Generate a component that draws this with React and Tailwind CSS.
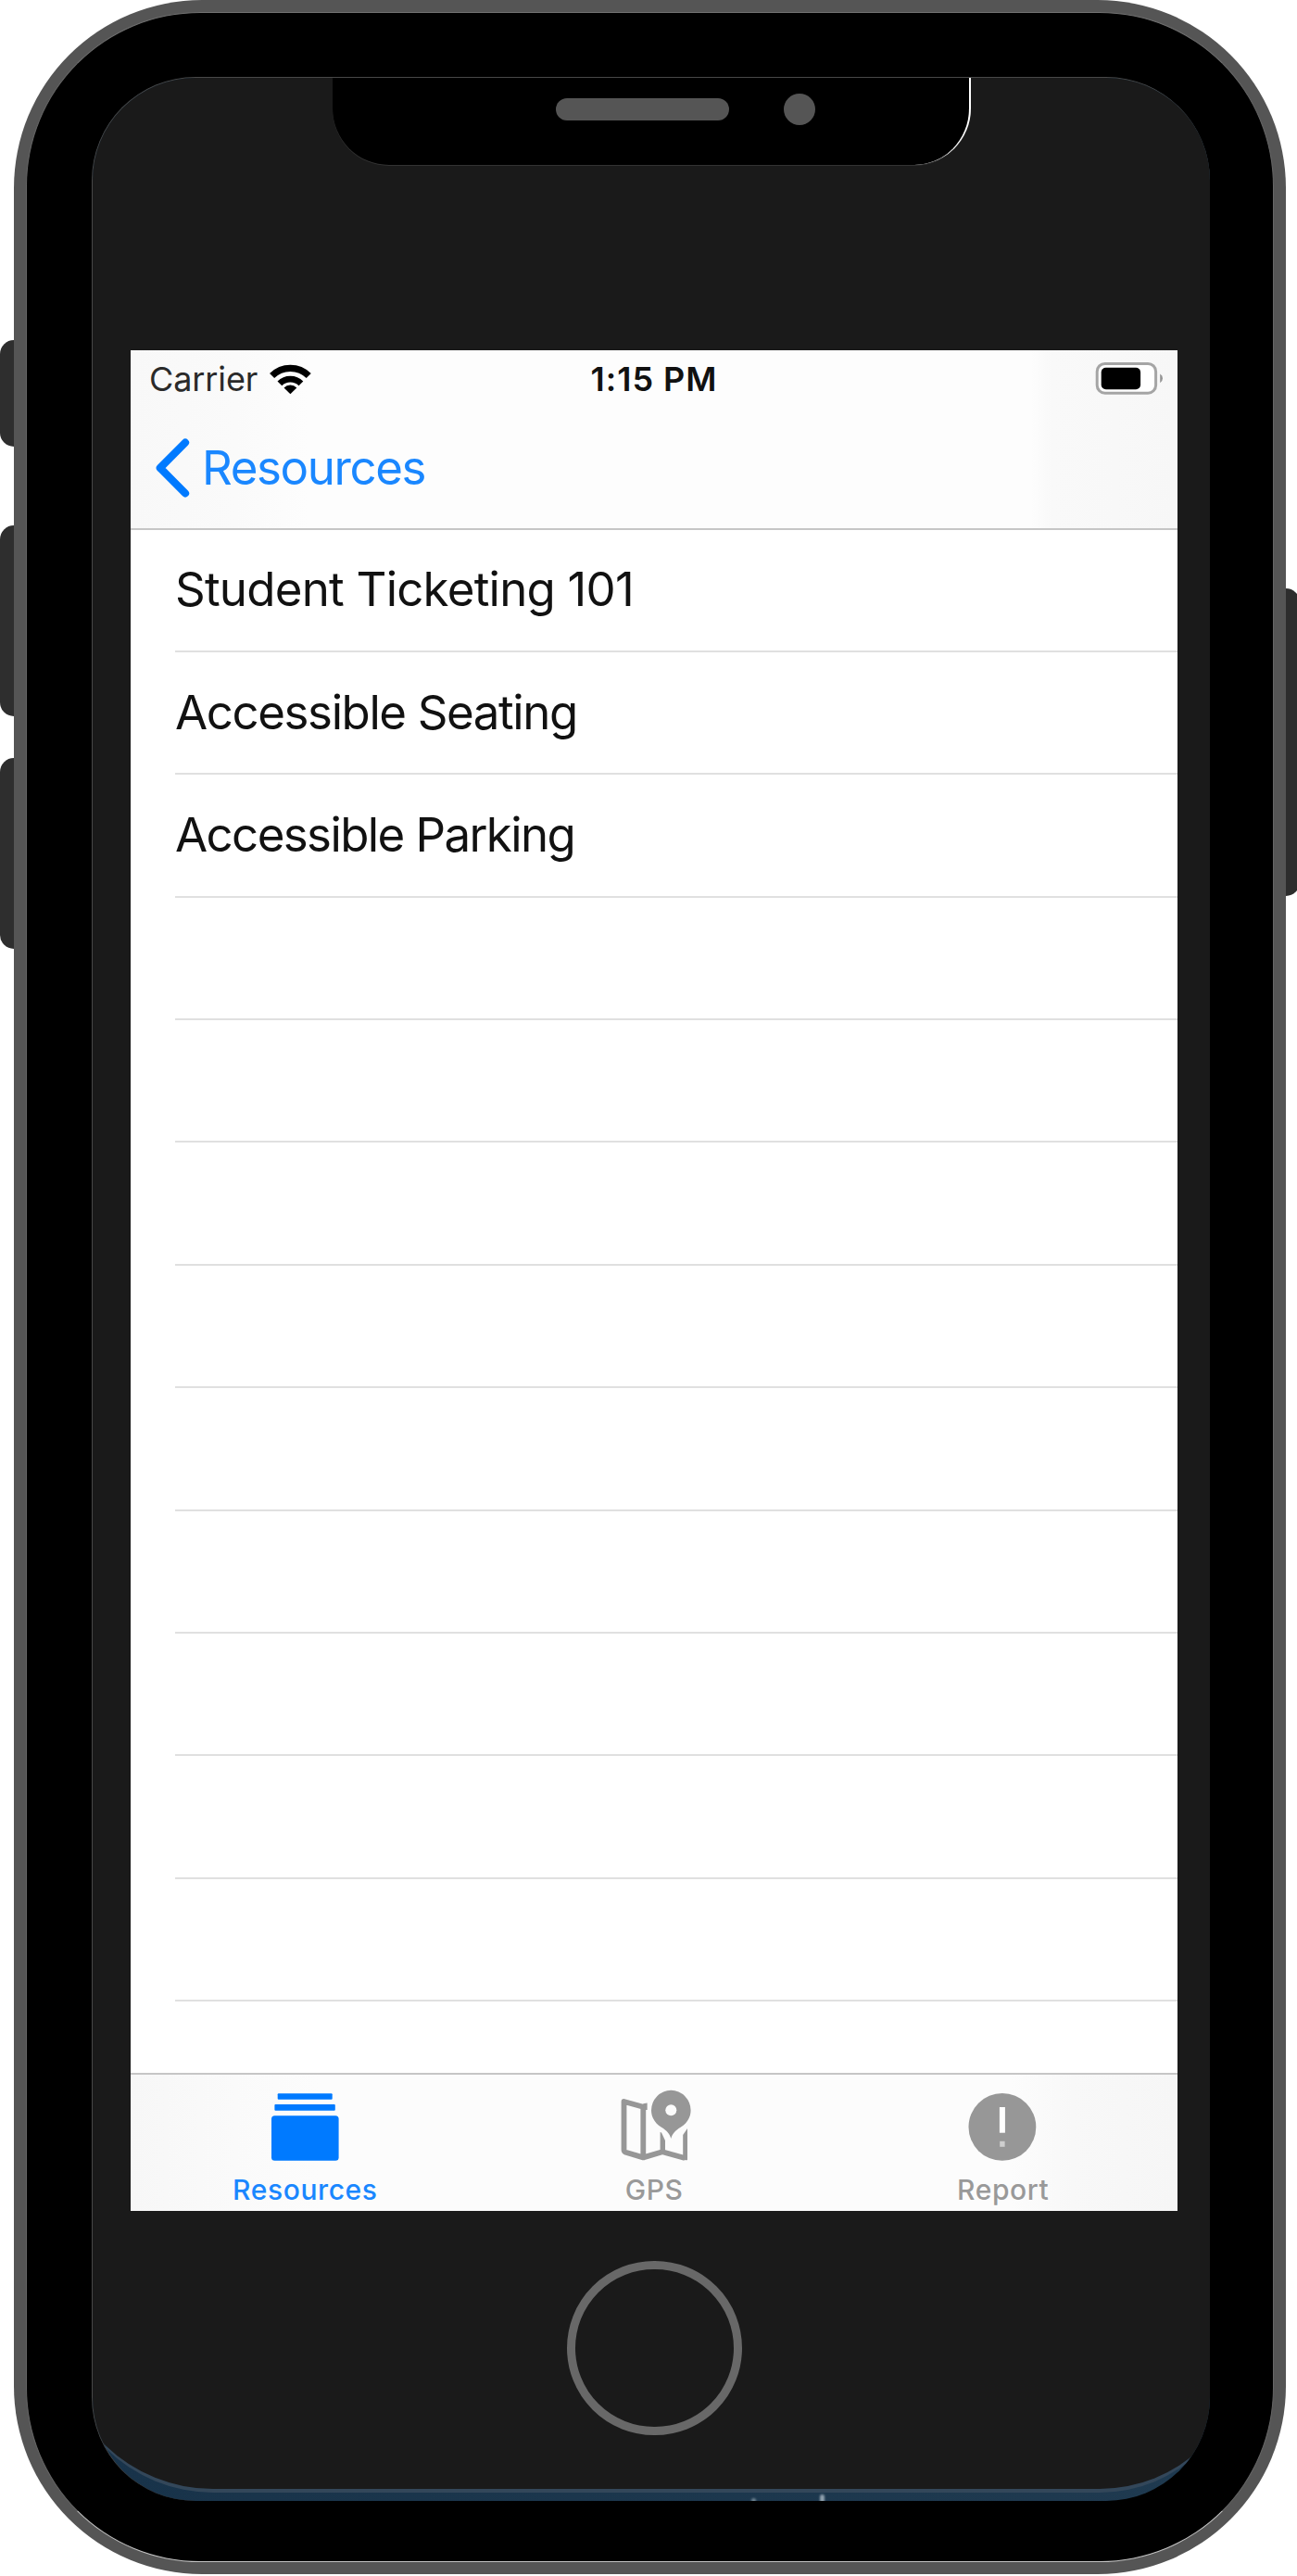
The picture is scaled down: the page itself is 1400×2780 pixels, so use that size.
import React from "react";

const rows = [
  { label: "Student Ticketing 101", tracking: "tracking-[-0.77px]" },
  { label: "Accessible Seating", tracking: "tracking-[-1.4px]" },
  { label: "Accessible Parking", tracking: "tracking-[-1.6px]" },
  ...Array.from({ length: 9 }, () => ({ label: "", tracking: "" })),
];

function WifiIcon() {
  return (
    <svg className="h-[36px] w-[47px] shrink-0" viewBox="0 0 47 36" fill="none" stroke="#000">
      <path d="M3.6 14.5A28 28 0 0 1 43.2 14.5" strokeWidth="7.2" />
      <path d="M11.9 22.8A16.3 16.3 0 0 1 34.9 22.8" strokeWidth="6.8" />
      <path d="M23.4 34.3L16.5 27.4A9.7 9.7 0 0 1 30.3 27.4Z" fill="#000" stroke="none" />
    </svg>
  );
}

function BatteryIcon() {
  return (
    <svg className="-mt-px h-[40px] w-[75px]" viewBox="0 0 75 40">
      <rect x="2.2" y="3.4" width="63.4" height="31.8" rx="8.5" fill="#fff" stroke="#a5a5a5" strokeWidth="3" />
      <rect x="6.7" y="7.7" width="42.4" height="23.6" rx="5" fill="#000" />
      <path d="M70.2 14.5Q73 16 73 19.3T70.2 24.2Z" fill="#959595" />
    </svg>
  );
}

function StackIcon() {
  return (
    <svg className="h-[80px] w-[80px]" viewBox="0 0 80 80" fill="#007aff">
      <rect x="10.7" y="4.3" width="59" height="6.4" rx="1" />
      <rect x="7.4" y="16" width="65.4" height="6.8" rx="1" />
      <rect x="4" y="28.3" width="72.6" height="48.4" rx="3.5" />
    </svg>
  );
}

function MapPinIcon() {
  return (
    <svg className="h-[80px] w-[80px]" viewBox="0 0 80 80">
      <path
        d="M7.5 13L28.3 18.8V73.4L9.4 67.8Q7.5 67 7.5 65ZM28.3 73.4L49 67.2L73.3 74"
        fill="none"
        stroke="#979797"
        strokeWidth="5.8"
        strokeLinejoin="round"
      />
      <path d="M28.3 15.2L32.6 14.6V22H28Z" fill="#979797" />
      <path d="M46.6 46L48 46.4L52 55V68H46.6Z" fill="#979797" />
      <path d="M71.2 49L76 42V76Q73.5 77 71.2 75Z" fill="#979797" />
      <path
        d="M58.3 53C56.8 47.5 53.8 44.5 48 40.8C41 36.5 37 29.8 37 22.5A21.3 21.7 0 0 1 79.6 22.5C79.6 29.8 75.6 36.5 68.6 40.8C62.8 44.5 59.8 47.5 58.3 53Z"
        fill="#979797"
      />
      <circle cx="58.3" cy="22.3" r="6" fill="#fcfcfc" />
    </svg>
  );
}

function AlertIcon() {
  return (
    <svg className="h-[80px] w-[80px]" viewBox="0 0 80 80">
      <circle cx="38.9" cy="40.4" r="36.4" fill="#979797" />
      <rect x="35.9" y="19" width="6" height="27.7" fill="#fff" />
      <rect x="36.2" y="55.8" width="5.4" height="6" fill="#cfcfcf" />
    </svg>
  );
}

const tabs = [
  { label: "Resources", Icon: StackIcon, style: "text-[#1a87ff] tracking-[0.6px]" },
  { label: "GPS", Icon: MapPinIcon, style: "text-[#999999] tracking-[0.5px]" },
  { label: "Report", Icon: AlertIcon, style: "text-[#999999] tracking-[0.6px]" },
];

function AppScreen() {
  return (
    <div className="flex h-[2008px] w-[1130px] flex-col bg-white">
      <header className="h-[194px] border-b-2 border-[#c6c6c6] bg-[linear-gradient(90deg,#f8f8f8_0%,#fafafa_10%,#fdfdfd_17%,#fdfdfd_86%,#f9f9f9_88%,#f7f7f7_100%)]">
        <div className="grid h-[62px] grid-cols-3 items-center text-[36px] leading-none">
          <div className="flex items-center gap-[12px] pl-[20px] text-[#2a2a2a]">
            <span className="tracking-[-0.1px]">Carrier</span>
            <WifiIcon />
          </div>
          <div className="text-center font-semibold tracking-[1px] text-[#111]">1:15 PM</div>
          <div className="flex justify-end pr-[14px]">
            <BatteryIcon />
          </div>
        </div>
        <div className="flex h-[128px] items-center pt-px pl-[26px] text-[#1a87ff]">
          <svg className="h-[72px] w-[40px]" viewBox="0 0 40 72" fill="none" stroke="#007aff">
            <path d="M33 8.6L5.8 36L33 63.4" strokeWidth="8.2" strokeLinecap="round" strokeLinejoin="round" />
          </svg>
          <span className="ml-[11px] text-[51px] leading-none tracking-[-1.4px]">Resources</span>
        </div>
      </header>
      <main className="h-[1665px] overflow-hidden">
        <ul className="-mt-[0.5px] pl-[48px]">
          {rows.map((row, i) => (
            <li
              key={i}
              className="flex h-[132.4px] items-center border-b-2 border-[#e0e0e0] pb-[2px] text-[51px] leading-none text-[#111]"
            >
              <span className={row.tracking}>{row.label}</span>
            </li>
          ))}
        </ul>
      </main>
      <nav className="grid h-[149px] grid-cols-3 border-t-2 border-[#c6c6c6] bg-[linear-gradient(90deg,#f7f7f7_0%,#fafafa_10%,#fcfcfc_18%,#fcfcfc_84%,#f8f8f8_90%,#f6f6f6_100%)]">
        {tabs.map(({ label, Icon, style }) => (
          <div key={label} className="flex flex-col items-center pt-[16px]">
            <Icon />
            <span className={`mt-[13px] text-[30px] leading-[30px] font-medium ${style}`}>{label}</span>
          </div>
        ))}
      </nav>
    </div>
  );
}

function Notch() {
  return (
    <div className="absolute -top-px left-[259px] h-[95px] w-[689px] rounded-b-[61px] border-r-2 border-white bg-black shadow-[0_1px_0_#333]">
      <div className="flex h-[70px] items-center gap-[59px] pl-[241px]">
        <div className="h-[24px] w-[187px] rounded-full bg-[#555]" />
        <div className="h-[34px] w-[34px] rounded-full bg-[#555]" />
      </div>
    </div>
  );
}

export default function App() {
  return (
    <div className="flex h-[2780px] w-[1400px] items-start overflow-hidden bg-white font-[Inter,sans-serif]">
      <div className="flex w-[15px] flex-col pt-[367px]">
        <div className="h-[115px] rounded-l-[15px] bg-[#2e2e2e]" />
        <div className="mt-[85px] h-[206px] rounded-l-[15px] bg-[#2e2e2e]" />
        <div className="mt-[45px] h-[206px] rounded-l-[15px] bg-[#2e2e2e]" />
      </div>

      <div className="h-[2778px] w-[1373px] shrink-0 rounded-[203px] bg-[#555] px-[13px] pt-[13px]">
        <div className="h-[2752px] rounded-[188px] border border-x-[#666] border-t-[#707070] border-b-[#c4c4c4] bg-black pt-[69px] pl-[70px]">
          <div className="relative h-[2616px] w-[1207px] overflow-hidden rounded-[112px] border-t border-l border-[#484848] bg-linear-to-r from-[#18334a] to-[#1f3a50]">
            <div className="absolute -top-[100px] -left-[34px] h-[2706px] w-[1276px] rounded-br-[155px] rounded-bl-[164px] border-b-4 border-[#33475a] bg-[#1a1a1a]" />
            <div className="absolute top-[2608px] left-[785px] h-[10px] w-[5px] rounded-full bg-[#8fa0ad] blur-[1px]" />
            <div className="absolute top-[2612px] left-[711px] h-[6px] w-[5px] rounded-full bg-[#6f8492] blur-[1px]" />
            <Notch />
            <div className="relative mt-[294px] ml-[41px]">
              <AppScreen />
              <div className="mt-[54px] ml-[471px] h-[188px] w-[189px] rounded-full border-[9px] border-[#686868]" />
            </div>
          </div>
        </div>
      </div>

      <div className="w-[12px] overflow-hidden pt-[635px]">
        <div className="h-[332px] w-[15px] rounded-r-[15px] bg-[#2d2d2d]" />
      </div>
    </div>
  );
}
